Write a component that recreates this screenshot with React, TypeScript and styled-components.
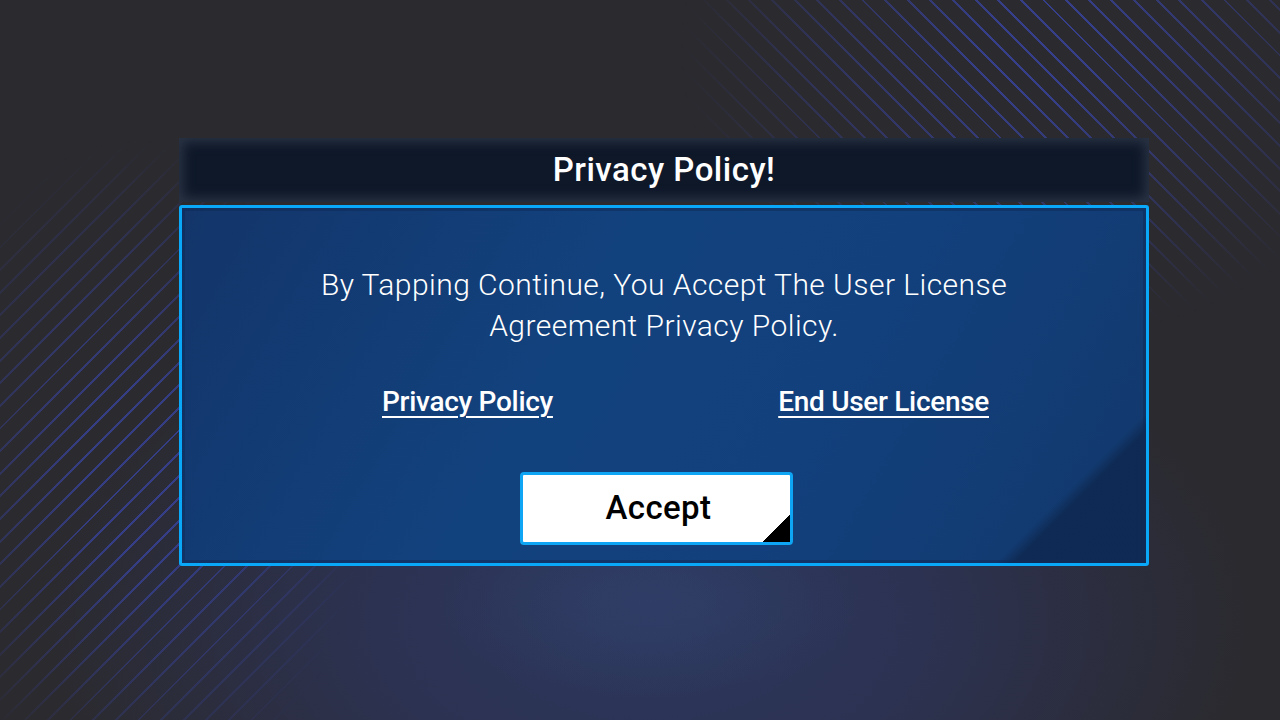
import React from "react";
import styled, { createGlobalStyle } from "styled-components";

const Global = createGlobalStyle`
  html, body { margin: 0; padding: 0; background: #2b2a2f; }
  body { font-family: Roboto, "Liberation Sans", sans-serif; }
  * { box-sizing: border-box; }
`;

const Page = styled.div`
  position: relative;
  width: 1280px;
  height: 720px;
  overflow: hidden;
  padding: 138px 131px 0 179px;
  background:
    radial-gradient(ellipse 220px 100px at 650px 600px, rgba(50, 66, 110, 0.55) 0%, rgba(50, 66, 110, 0) 100%),
    radial-gradient(ellipse 600px 360px at 650px 620px, #2c385e 0%, #2c3252 45%, rgba(43, 42, 47, 0) 100%),
    #2b2a2f;

  &::before,
  &::after {
    content: "";
    position: absolute;
    inset: 0;
    pointer-events: none;
  }
  &::before {
    background: repeating-linear-gradient(
      135deg,
      transparent 0 14px,
      rgba(62, 78, 200, 0.55) 14px 16px
    );
    -webkit-mask-image: radial-gradient(ellipse 230px 330px at 140px 470px, #000 25%, transparent 100%);
    mask-image: radial-gradient(ellipse 230px 330px at 140px 470px, #000 25%, transparent 100%);
  }
  &::after {
    background: repeating-linear-gradient(
      45deg,
      transparent 0 14px,
      rgba(62, 78, 200, 0.6) 14px 16px
    );
    -webkit-mask-image: radial-gradient(ellipse 360px 290px at 1040px 50px, #000 15%, transparent 100%);
    mask-image: radial-gradient(ellipse 360px 290px at 1040px 50px, #000 15%, transparent 100%);
  }
`;

const Dialog = styled.div`
  position: relative;
  z-index: 1;
  width: 970px;
  display: flex;
  flex-direction: column;
  gap: 3px;
`;

const TitleBar = styled.div`
  height: 64px;
  display: flex;
  align-items: center;
  justify-content: center;
  background: #0e1829;
  box-shadow: inset 0 0 12px 4px #2a3445;
`;

const Title = styled.h1`
  margin: 0;
  color: #ffffff;
  font-family: Roboto, "Liberation Sans", sans-serif;
  font-weight: 500;
  font-size: 33px;
  letter-spacing: 0.5px;
  padding-bottom: 2px;
`;

const Body = styled.div`
  height: 361px;
  border: 3px solid #0aa8f8;
  border-radius: 3px;
  background:
    linear-gradient(135deg, rgba(14, 38, 78, 0) 0 88.6%, rgba(14, 40, 80, 0.85) 90% 100%),
    linear-gradient(120deg, #13356a 0%, #12427e 40%, #12407c 65%, #12386c 100%);
  box-shadow: inset 0 0 0 3px rgba(14, 42, 85, 0.5);
  display: flex;
  flex-direction: column;
  align-items: center;
  padding-top: 56px;
`;

const Message = styled.p`
  margin: 0;
  width: 760px;
  text-align: center;
  color: #ffffff;
  font-family: Roboto, "Liberation Sans", sans-serif;
  font-weight: 300;
  font-size: 30px;
  line-height: 41px;
  letter-spacing: 0.45px;
`;

const LinkRow = styled.div`
  align-self: stretch;
  display: flex;
  justify-content: space-between;
  padding: 0 157px 0 200px;
  margin-top: 38px;
`;

const PolicyLink = styled.a`
  color: #ffffff;
  font-family: Roboto, "Liberation Sans", sans-serif;
  font-weight: 500;
  font-size: 28px;
  line-height: 36px;
  letter-spacing: -0.3px;
  text-decoration: underline;
  text-decoration-thickness: 2px;
  text-underline-offset: 5px;
  cursor: pointer;
`;

const AcceptButton = styled.button`
  position: relative;
  margin: 52px 15px 0 0;
  width: 273px;
  height: 73px;
  border: 3px solid #0ea6f4;
  border-radius: 4px;
  background: #ffffff;
  color: #000000;
  font-family: Roboto, "Liberation Sans", sans-serif;
  font-weight: 500;
  font-size: 33px;
  letter-spacing: 0.4px;
  cursor: pointer;
  padding: 0 0 2px 4px;

  &::after {
    content: "";
    position: absolute;
    right: 0;
    bottom: 0;
    width: 28px;
    height: 28px;
    background: linear-gradient(135deg, transparent 50%, #000 50%);
  }
`;

export default function App() {
  return (
    <>
      <Global />
      <Page>
        <Dialog>
          <TitleBar>
            <Title>Privacy Policy!</Title>
          </TitleBar>
          <Body>
            <Message>
              By Tapping Continue, You Accept The User License Agreement Privacy Policy.
            </Message>
            <LinkRow>
              <PolicyLink>Privacy Policy</PolicyLink>
              <PolicyLink>End User License</PolicyLink>
            </LinkRow>
            <AcceptButton>Accept</AcceptButton>
          </Body>
        </Dialog>
      </Page>
    </>
  );
}
